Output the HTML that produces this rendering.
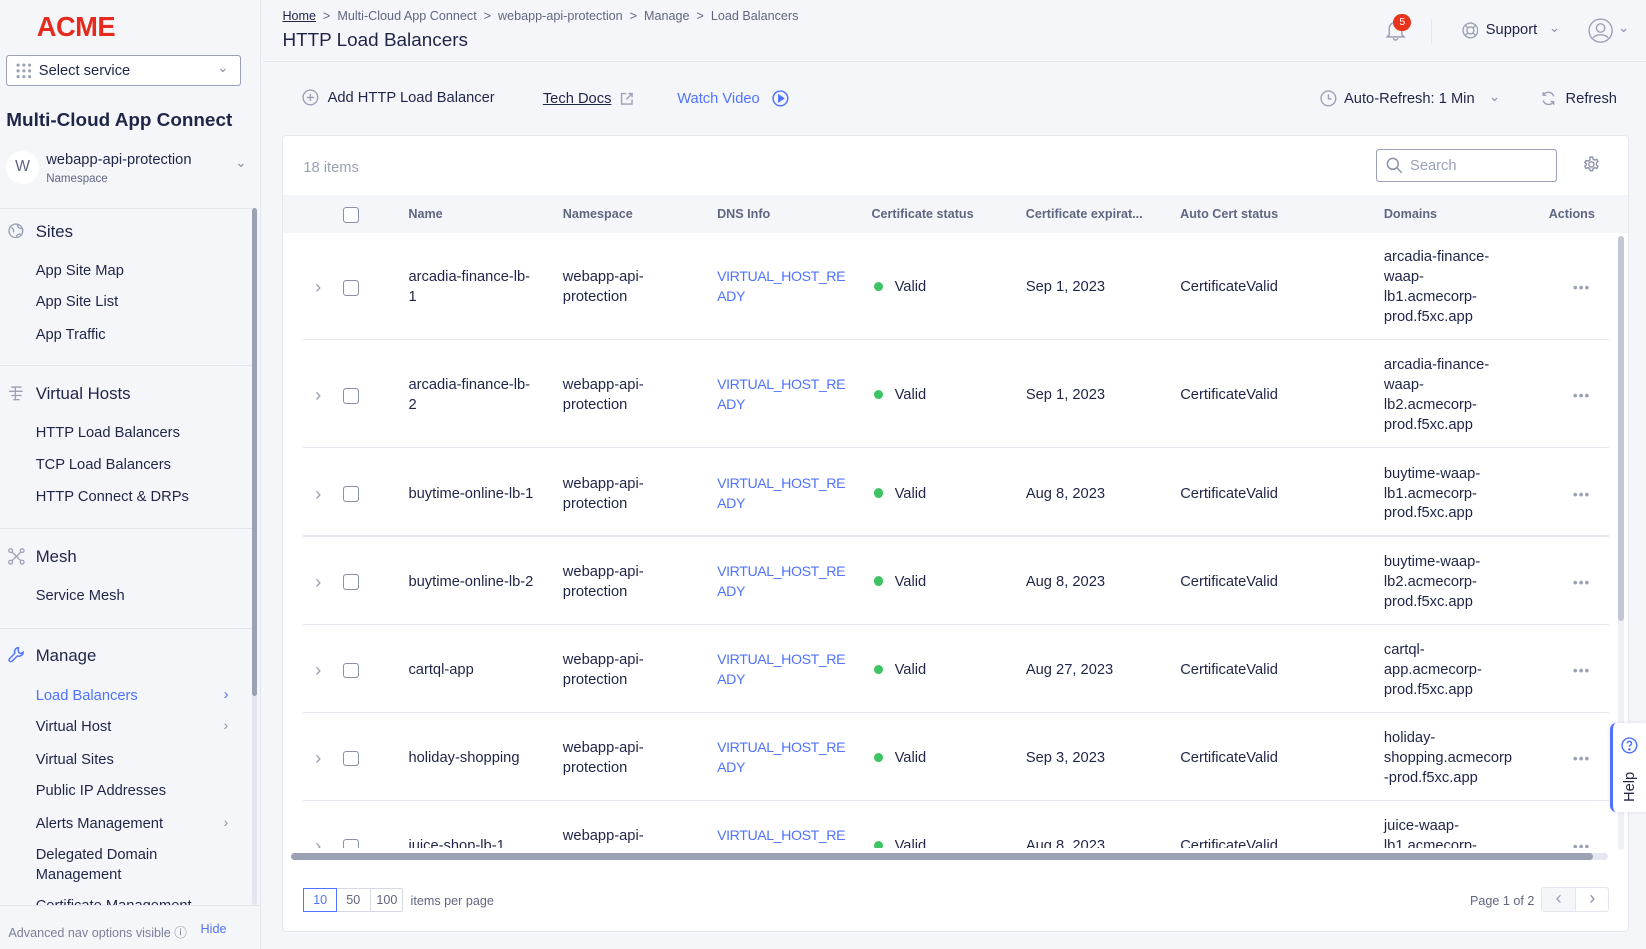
<!DOCTYPE html>
<html><head><meta charset="utf-8"><style>
*{box-sizing:border-box;margin:0;padding:0}
html,body{width:1646px;height:949px;overflow:hidden;background:#f5f6fa}
#root{zoom:1.05;width:1568px;height:904px;position:relative;font-family:"Liberation Sans",sans-serif;color:#1f2547;font-size:14px}
.a{position:absolute;white-space:nowrap}
.side{position:absolute;left:0;top:0;width:249px;height:904px;background:#f5f6fa;border-right:1px solid #e3e6ee}
.hr{position:absolute;left:0;width:240px;height:1px;background:#e3e6ee}
.grp{font-size:16px;color:#1f2547}
.it{font-size:14px;left:34px}
.chev{color:#8a91a8;font-size:13px}
.card{position:absolute;left:269px;top:129px;width:1282px;height:759px;background:#fff;border:1px solid #e6e8ef;border-radius:4px;overflow:hidden}
.th{position:absolute;left:0;top:56px;width:1282px;height:36px;background:#f5f6fa;font-size:12px;font-weight:bold;color:#5f6680}
.c{position:absolute;line-height:19px;white-space:nowrap}
.cb{width:15px;height:15px;border:1px solid #8a91a8;border-radius:3px;background:#fff}
.blue{color:#4f73ff}
.dot{width:9px;height:9px;border-radius:50%;background:#3fc463;display:inline-block;margin-right:11px;vertical-align:0}
</style></head><body><div id="root">

<div class="side">
 <div class="a" style="left:35px;top:10px;font-size:26px;font-weight:bold;color:#e62b1e;letter-spacing:-0.5px">ACME</div>
 <div class="a" style="left:6px;top:52px;width:224px;height:30px;border:1px solid #9aa1b5;border-radius:3px;background:#fff">
  <svg class="a" style="left:8px;top:7px" width="15" height="15"><g fill="#9aa1b5"><circle cx="2" cy="2" r="1.5"/><circle cx="7.5" cy="2" r="1.5"/><circle cx="13" cy="2" r="1.5"/><circle cx="2" cy="7.5" r="1.5"/><circle cx="7.5" cy="7.5" r="1.5"/><circle cx="13" cy="7.5" r="1.5"/><circle cx="2" cy="13" r="1.5"/><circle cx="7.5" cy="13" r="1.5"/><circle cx="13" cy="13" r="1.5"/></g></svg>
  <div class="a" style="left:30px;top:7px;font-size:14px">Select service</div>
  <div class="a chev" style="left:200px;top:4px">&#8964;</div>
 </div>
 <div class="a" style="left:6px;top:105px;font-size:18px;font-weight:bold">Multi-Cloud App Connect</div>
 <div class="a" style="left:6px;top:144px;width:31px;height:31px;border-radius:50%;background:#fff;text-align:center;line-height:31px;color:#5f6680;font-size:15px">W</div>
 <div class="a" style="left:44px;top:145px;font-size:14px">webapp-api-protection</div>
 <div class="a" style="left:44px;top:165px;font-size:11px;color:#5f6680">Namespace</div>
 <div class="a chev" style="left:224px;top:148px">&#8964;</div>
 <div class="hr" style="top:198px"></div>
 <svg class="a" style="left:8px;top:212px" width="15" height="15" fill="none" stroke="#9aa1b5" stroke-width="1.3"><circle cx="7.5" cy="7.5" r="6.5"/><path d="M3 4c2 1 3 3 2 5M9 1.5c0 3 2 4 5 4M8 14c0-3 2-4 5-3"/></svg>
 <div class="a grp" style="left:34px;top:211px">Sites</div>
 <div class="a it" style="top:250px">App Site Map</div>
 <div class="a it" style="top:280px">App Site List</div>
 <div class="a it" style="top:311px">App Traffic</div>
 <div class="hr" style="top:348px"></div>
 <svg class="a" style="left:8px;top:367px" width="15" height="15" fill="none" stroke="#9aa1b5" stroke-width="1.3"><path d="M3 2h10M1 6h13M3 10h10M5 14h6M7 2v12"/></svg>
 <div class="a grp" style="left:34px;top:366px">Virtual Hosts</div>
 <div class="a it" style="top:405px">HTTP Load Balancers</div>
 <div class="a it" style="top:435px">TCP Load Balancers</div>
 <div class="a it" style="top:466px">HTTP Connect &amp; DRPs</div>
 <div class="hr" style="top:503px"></div>
 <svg class="a" style="left:8px;top:522px" width="16" height="16" fill="none" stroke="#9aa1b5" stroke-width="1.2"><circle cx="2.5" cy="2.5" r="1.8"/><circle cx="13.5" cy="2.5" r="1.8"/><circle cx="2.5" cy="13.5" r="1.8"/><circle cx="13.5" cy="13.5" r="1.8"/><path d="M4 4l8 8M12 4l-8 8"/></svg>
 <div class="a grp" style="left:34px;top:521px">Mesh</div>
 <div class="a it" style="top:560px">Service Mesh</div>
 <div class="hr" style="top:598px"></div>
 <svg class="a" style="left:8px;top:615px" width="16" height="16" fill="none" stroke="#4f73ff" stroke-width="1.4"><path d="M10 1.5a4 4 0 0 0-3.5 5.5L1.5 12a1.6 1.6 0 0 0 2.4 2.4L9 9.4A4 4 0 0 0 14.5 6l-2.3 1.2-2-1-.5-2.3z"/></svg>
 <div class="a grp" style="left:34px;top:615px">Manage</div>
 <div class="a it blue" style="top:655px">Load Balancers</div><div class="a" style="left:213px;top:654px;color:#4f73ff">&#8250;</div>
 <div class="a it" style="top:685px">Virtual Host</div><div class="a chev" style="left:213px;top:684px">&#8250;</div>
 <div class="a it" style="top:716px">Virtual Sites</div>
 <div class="a it" style="top:746px">Public IP Addresses</div>
 <div class="a it" style="top:777px">Alerts Management</div><div class="a chev" style="left:213px;top:776px">&#8250;</div>
 <div class="a it" style="top:807px">Delegated Domain</div>
 <div class="a it" style="top:826px">Management</div>
 <div class="a it" style="top:855px">Certificate Management</div>
 <div class="a" style="left:240px;top:198px;width:5px;height:664px;background:#e3e6ee;border-radius:3px"></div>
 <div class="a" style="left:240px;top:198px;width:5px;height:465px;background:#9aa1b5;border-radius:3px"></div>
 <div class="a" style="left:0;top:862px;width:248px;height:42px;background:#f5f6fa;border-top:1px solid #e3e6ee"></div>
 <div class="a" style="left:8px;top:878px;font-size:12px;color:#7a8098">Advanced nav options visible &#9432;</div>
 <div class="a blue" style="left:191px;top:878px;font-size:12px">Hide</div>
</div>

<div class="a" style="left:250px;top:58px;width:1318px;height:1px;background:#e3e6ee"></div>
<div class="a" style="left:269px;top:9px;font-size:12px;color:#5f6680"><u style="color:#1f2547">Home</u> &nbsp;&gt;&nbsp; Multi-Cloud App Connect &nbsp;&gt;&nbsp; webapp-api-protection &nbsp;&gt;&nbsp; Manage &nbsp;&gt;&nbsp; Load Balancers</div>
<div class="a" style="left:269px;top:29px;font-size:18px">HTTP Load Balancers</div>
<svg class="a" style="left:1318px;top:17px" width="22" height="22" fill="none" stroke="#9aa1b5" stroke-width="1.4"><path d="M5 16V10a6 6 0 0 1 12 0v6l2 2H3zM9 19a2 2 0 0 0 4 0"/></svg>
<div class="a" style="left:1327px;top:13px;width:17px;height:17px;border-radius:50%;background:#e8341c;color:#fff;font-size:10px;text-align:center;line-height:17px">5</div>
<div class="a" style="left:1363px;top:18px;width:1px;height:24px;background:#e3e6ee"></div>
<svg class="a" style="left:1392px;top:21px" width="16" height="16" fill="none" stroke="#9aa1b5" stroke-width="1.3"><circle cx="8" cy="8" r="7"/><circle cx="8" cy="8" r="3.3"/><path d="M3 3l2.6 2.6M13 3l-2.6 2.6M3 13l2.6-2.6M13 13l-2.6-2.6"/></svg>
<div class="a" style="left:1415px;top:21px;font-size:14px">Support</div>
<div class="a chev" style="left:1475px;top:19px">&#8964;</div>
<svg class="a" style="left:1512px;top:17px" width="24" height="24" fill="none" stroke="#9aa1b5" stroke-width="1.3"><circle cx="12" cy="12" r="11"/><circle cx="12" cy="9.5" r="4"/><path d="M5 19c2-4 12-4 14 0"/></svg>
<div class="a chev" style="left:1541px;top:19px">&#8964;</div>

<svg class="a" style="left:288px;top:85px" width="16" height="16" fill="none" stroke="#9aa1b5" stroke-width="1.3"><circle cx="8" cy="8" r="7"/><path d="M8 4.5v7M4.5 8h7"/></svg>
<div class="a" style="left:312px;top:86px;font-size:14px">Add HTTP Load Balancer</div>
<div class="a" style="left:517px;top:87px;font-size:14px;text-decoration:underline">Tech Docs</div>
<svg class="a" style="left:590px;top:88px" width="13" height="13" fill="none" stroke="#9aa1b5" stroke-width="1.3"><path d="M6 1.5H1.5v10h10V7M8 1.5h3.5V5M11.5 1.5L6 7"/></svg>
<div class="a blue" style="left:645px;top:87px;font-size:14px">Watch Video</div>
<svg class="a" style="left:735px;top:86px" width="16" height="16" fill="none" stroke="#4f73ff" stroke-width="1.4"><circle cx="8" cy="8" r="7"/><path d="M6.5 5v6l4.5-3z" fill="#4f73ff"/></svg>
<svg class="a" style="left:1257px;top:86px" width="16" height="16" fill="none" stroke="#9aa1b5" stroke-width="1.3"><circle cx="8" cy="8" r="7"/><path d="M8 4v4.5h3"/></svg>
<div class="a" style="left:1280px;top:87px;font-size:14px">Auto-Refresh: 1 Min</div>
<div class="a chev" style="left:1418px;top:85px">&#8964;</div>
<svg class="a" style="left:1467px;top:86px" width="16" height="16" fill="none" stroke="#9aa1b5" stroke-width="1.3"><path d="M13 6A5.5 5.5 0 0 0 3 5M3 10a5.5 5.5 0 0 0 10 1M3 2v3h3M13 14v-3h-3"/></svg>
<div class="a" style="left:1491px;top:87px;font-size:14px">Refresh</div>

<div class="card">
 <div class="a" style="left:19px;top:22px;font-size:14px;color:#9aa1b5">18 items</div>
 <div class="a" style="left:1041px;top:12px;width:172px;height:31px;border:1px solid #9aa1b5;border-radius:3px">
  <svg class="a" style="left:8px;top:7px" width="16" height="16" fill="none" stroke="#8a91a8" stroke-width="1.4"><circle cx="6.5" cy="6.5" r="5.2"/><path d="M10.5 10.5L15 15"/></svg>
  <div class="a" style="left:31px;top:8px;color:#9aa1b5;font-size:14px">Search</div>
 </div>
 <svg class="a" style="left:1238px;top:19px" width="16" height="16" fill="none" stroke="#8a91a8" stroke-width="1.3"><circle cx="8" cy="8" r="2.5"/><path d="M6.8 1h2.4l.4 2 1.6.9 1.9-.7 1.2 2-1.5 1.4v1.8l1.5 1.4-1.2 2-1.9-.7-1.6.9-.4 2H6.8l-.4-2-1.6-.9-1.9.7-1.2-2 1.5-1.4V7.6L1.7 6.2l1.2-2 1.9.7 1.6-.9z"/></svg>
 <div class="th">
  <div class="c cb" style="left:57px;top:11px"></div>
  <div class="c" style="left:119px;top:9px">Name</div>
  <div class="c" style="left:266px;top:9px">Namespace</div>
  <div class="c" style="left:413px;top:9px">DNS Info</div>
  <div class="c" style="left:560px;top:9px">Certificate status</div>
  <div class="c" style="left:707px;top:9px">Certificate expirat...</div>
  <div class="c" style="left:854px;top:9px">Auto Cert status</div>
  <div class="c" style="left:1048px;top:9px">Domains</div>
  <div class="c" style="left:1205px;top:9px">Actions</div>
 </div>
</div>

<div id="rows" class="a" style="left:270px;top:221px;width:1262px;height:587px;overflow:hidden"></div>
<div class="a" style="left:1541px;top:225px;width:6px;height:585px;background:#eef0f5;border-radius:3px"></div>
<div class="a" style="left:1541px;top:225px;width:6px;height:366px;background:#c2c7d4;border-radius:3px"></div>
<div class="a" style="left:277px;top:812px;width:1254px;height:7px;background:#e6e8ef;border-radius:4px"></div>
<div class="a" style="left:277px;top:812px;width:1240px;height:7px;background:#9aa1b5;border-radius:4px"></div>

<div class="a" style="left:289px;top:846px;width:95px;height:23px;border:1px solid #d6d9e3;border-radius:2px;font-size:12px;color:#5f6680">
 <div class="a" style="left:-1px;top:-1px;width:32px;height:23px;border:1px solid #4f73ff;color:#4f73ff;text-align:center;line-height:21px;background:#fff">10</div>
 <div class="a" style="left:31px;top:0;width:32px;height:21px;border-right:1px solid #d6d9e3;text-align:center;line-height:21px">50</div>
 <div class="a" style="left:63px;top:0;width:31px;height:21px;text-align:center;line-height:21px">100</div>
</div>
<div class="a" style="left:391px;top:851px;font-size:12px;color:#5f6680">items per page</div>
<div class="a" style="left:1400px;top:851px;font-size:12px;color:#5f6680">Page 1 of 2</div>
<div class="a" style="left:1468px;top:845px;width:64px;height:24px;border:1px solid #e3e6ee;border-radius:3px">
 <div class="a" style="left:0;top:0;width:32px;height:22px;background:#f5f6fa;border-right:1px solid #e3e6ee;text-align:center;line-height:20px;color:#9aa1b5;font-size:18px">&#8249;</div>
 <div class="a" style="left:32px;top:0;width:31px;height:22px;text-align:center;line-height:20px;color:#8a91a8;font-size:18px">&#8250;</div>
</div>

<div class="a" style="left:1533px;top:689px;width:35px;height:84px;background:#fff;border-left:3px solid #4f73ff;border-radius:6px 0 0 6px;box-shadow:0 0 4px rgba(0,0,0,.1)">
 <svg class="a" style="left:8px;top:13px" width="16" height="16" fill="none" stroke="#4f73ff" stroke-width="1.4"><circle cx="8" cy="8" r="7"/><path d="M6 6a2 2 0 1 1 2.5 2c-.5.2-.5.6-.5 1.3"/><circle cx="8" cy="11.8" r=".5" fill="#4f73ff"/></svg>
 <div class="a" style="transform:rotate(-90deg);transform-origin:left top;font-size:14px;color:#1f2547;left:9px;top:75px">Help</div>
</div>

<script>
var rows=[
["arcadia-finance-lb-<br>1","Sep 1, 2023","arcadia-finance-<br>waap-<br>lb1.acmecorp-<br>prod.f5xc.app",103],
["arcadia-finance-lb-<br>2","Sep 1, 2023","arcadia-finance-<br>waap-<br>lb2.acmecorp-<br>prod.f5xc.app",103],
["buytime-online-lb-1","Aug 8, 2023","buytime-waap-<br>lb1.acmecorp-<br>prod.f5xc.app",84],
["buytime-online-lb-2","Aug 8, 2023","buytime-waap-<br>lb2.acmecorp-<br>prod.f5xc.app",84],
["cartql-app","Aug 27, 2023","cartql-<br>app.acmecorp-<br>prod.f5xc.app",84],
["holiday-shopping","Sep 3, 2023","holiday-<br>shopping.acmecorp<br>-prod.f5xc.app",84],
["juice-shop-lb-1","Aug 8, 2023","juice-waap-<br>lb1.acmecorp-<br>prod.f5xc.app",84]];
var h="",t=0;
rows.forEach(function(r){
 var m=t+r[3]/2+2;
 function cell(x,html,extra){return '<div class="c" style="left:'+x+'px;top:'+m+'px;transform:translateY(-50%);'+(extra||'')+'">'+html+'</div>';}
 h+=cell(30,'&#8250;','color:#9aa1b5;font-size:18px');
 h+='<div class="c cb" style="left:57px;top:'+(m-8)+'px"></div>';
 h+=cell(119,r[0]);
 h+=cell(266,'webapp-api-<br>protection');
 h+=cell(413,'VIRTUAL_HOST_RE<br>ADY','color:#4f73ff;font-size:13.5px;letter-spacing:-0.4px');
 h+=cell(562,'<span class="dot"></span>Valid');
 h+=cell(707,r[1]);
 h+=cell(854,'CertificateValid');
 h+=cell(1048,r[2]);
 h+=cell(1228,'&bull;&bull;&bull;','color:#9aa1b5;font-size:13px;letter-spacing:1px');
 t+=r[3];
 h+='<div class="a" style="left:19px;top:'+(t-1)+'px;width:1243px;height:1px;background:#e6e8ef"></div>';
});
document.getElementById('rows').innerHTML=h;
</script>
</div></body></html>
